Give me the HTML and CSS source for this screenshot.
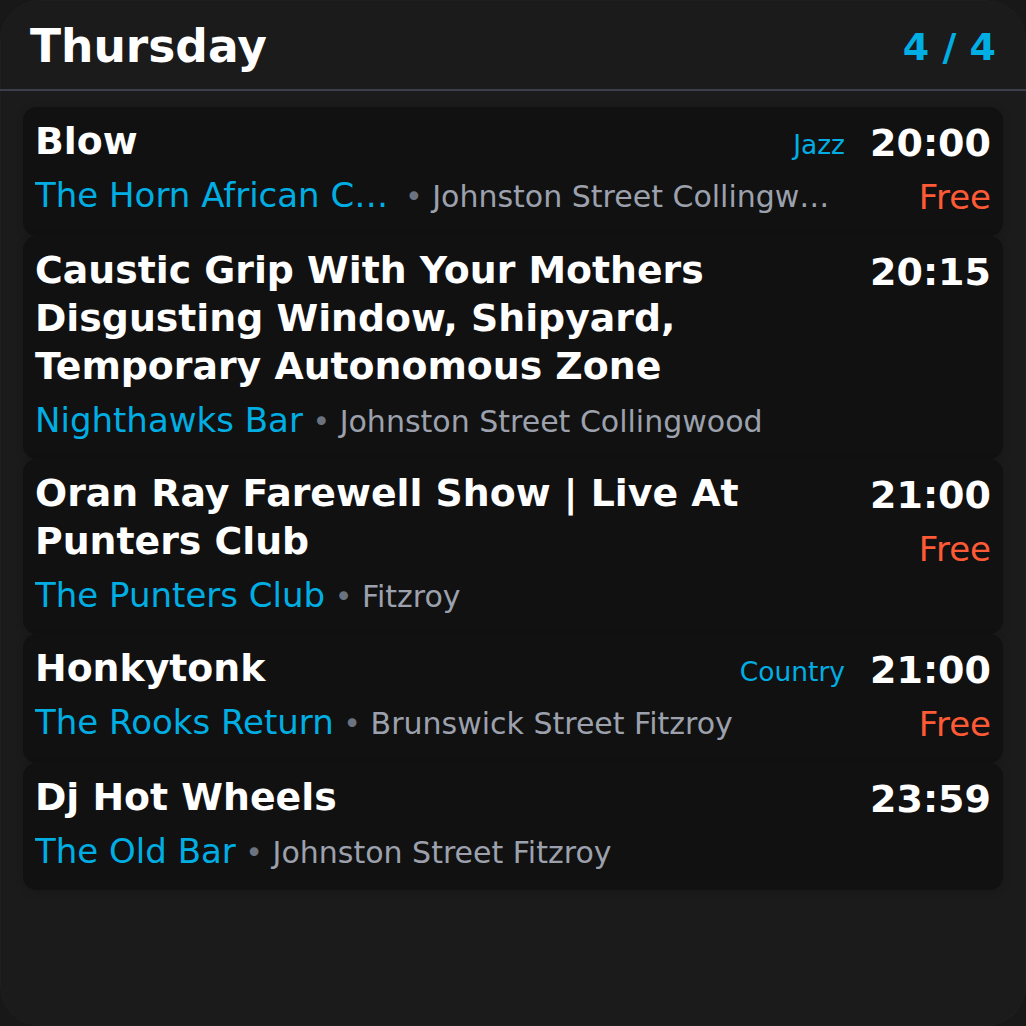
FILE: index.html
```html
<!DOCTYPE html>
<html lang="en">
<head>
<meta charset="utf-8">
<title>Thursday</title>
<link rel="stylesheet" href="styles.css">
</head>
<body>
<div class="widget">
  <header class="head">
    <h1 class="day">Thursday</h1>
    <span class="count">4 / 4</span>
  </header>
  <div class="list">
    <article class="card">
      <div class="main">
        <div class="top"><span class="title">Blow</span><span class="genre">Jazz</span></div>
        <div class="meta"><span class="venue">The Horn African Cafe</span><span class="addr"><span class="dot"> • </span>Johnston Street Collingwood</span></div>
      </div>
      <div class="side"><span class="time">20:00</span><span class="price">Free</span></div>
    </article>
    <article class="card">
      <div class="main">
        <div class="top"><span class="title">Caustic Grip With Your Mothers Disgusting Window, Shipyard, Temporary Autonomous Zone</span></div>
        <div class="meta"><span class="venue">Nighthawks Bar</span><span class="addr"><span class="dot"> • </span>Johnston Street Collingwood</span></div>
      </div>
      <div class="side"><span class="time">20:15</span></div>
    </article>
    <article class="card">
      <div class="main">
        <div class="top"><span class="title">Oran Ray Farewell Show | Live At Punters Club</span></div>
        <div class="meta"><span class="venue">The Punters Club</span><span class="addr"><span class="dot"> • </span>Fitzroy</span></div>
      </div>
      <div class="side"><span class="time">21:00</span><span class="price">Free</span></div>
    </article>
    <article class="card">
      <div class="main">
        <div class="top"><span class="title">Honkytonk</span><span class="genre">Country</span></div>
        <div class="meta"><span class="venue">The Rooks Return</span><span class="addr"><span class="dot"> • </span>Brunswick Street Fitzroy</span></div>
      </div>
      <div class="side"><span class="time">21:00</span><span class="price">Free</span></div>
    </article>
    <article class="card">
      <div class="main">
        <div class="top"><span class="title">Dj Hot Wheels</span></div>
        <div class="meta"><span class="venue">The Old Bar</span><span class="addr"><span class="dot"> • </span>Johnston Street Fitzroy</span></div>
      </div>
      <div class="side"><span class="time">23:59</span></div>
    </article>
  </div>
</div>
</body>
</html>
```
FILE: styles.css
```css
* { box-sizing: border-box; }
html, body { margin: 0; padding: 0; }
body {
  background: #181818;
  font-family: "DejaVu Sans", "Noto Sans", sans-serif;
  color: #ffffff;
}
.widget {
  width: 1026px;
  height: 1026px;
  background: #1b1b1b;
  border-radius: 40px;
  overflow: hidden;
  box-shadow: inset 0 0 0 1px rgba(255,255,255,0.02);
}
.head {
  display: flex;
  align-items: center;
  justify-content: space-between;
  padding: 20px 30px 16px 30px;
  border-bottom: 2px solid #3a3f4b;
}
.day {
  margin: 0;
  font-size: 45.5px;
  font-weight: bold;
  line-height: normal;
  color: #ffffff;
}
.count {
  font-size: 38px;
  font-weight: bold;
  color: #00aee3;
}
.list {
  padding: 16px 23px;
  display: flex;
  flex-direction: column;
}
.card {
  display: flex;
  gap: 25px;
  padding: 10px 12px 15px 12px;
  background: #111111;
  border-radius: 14px;
  box-shadow: 0 2px 8px rgba(0,0,0,0.15);
}
.main {
  flex: 1;
  min-width: 0;
  display: flex;
  flex-direction: column;
}
.top {
  display: flex;
  align-items: baseline;
  justify-content: space-between;
  gap: 16px;
}
.title {
  font-size: 37.8px;
  font-weight: bold;
  line-height: 48px;
  min-width: 0;
}
.genre {
  font-size: 26.5px;
  color: #00aee3;
  white-space: nowrap;
  line-height: 27px;
}
.meta {
  display: flex;
  align-items: baseline;
  margin-top: 6px;
  font-size: 34px;
  line-height: 48px;
  white-space: nowrap;
  min-width: 0;
}
.venue {
  color: #00aee3;
  max-width: 44.5%;
  overflow: hidden;
  text-overflow: ellipsis;
  flex-shrink: 0;
}
.addr {
  font-size: 30px;
  line-height: 40px;
  color: #9ca1ad;
  overflow: hidden;
  text-overflow: ellipsis;
  min-width: 0;
  white-space: pre;
}
.dot { color: #6b7280; }
.side {
  display: flex;
  flex-direction: column;
  align-items: flex-end;
  padding-top: 2px;
}
.time {
  font-size: 38px;
  font-weight: bold;
  line-height: 48px;
}
.price {
  margin-top: 6px;
  font-size: 34px;
  line-height: 48px;
  color: #ff5a36;
}
```
